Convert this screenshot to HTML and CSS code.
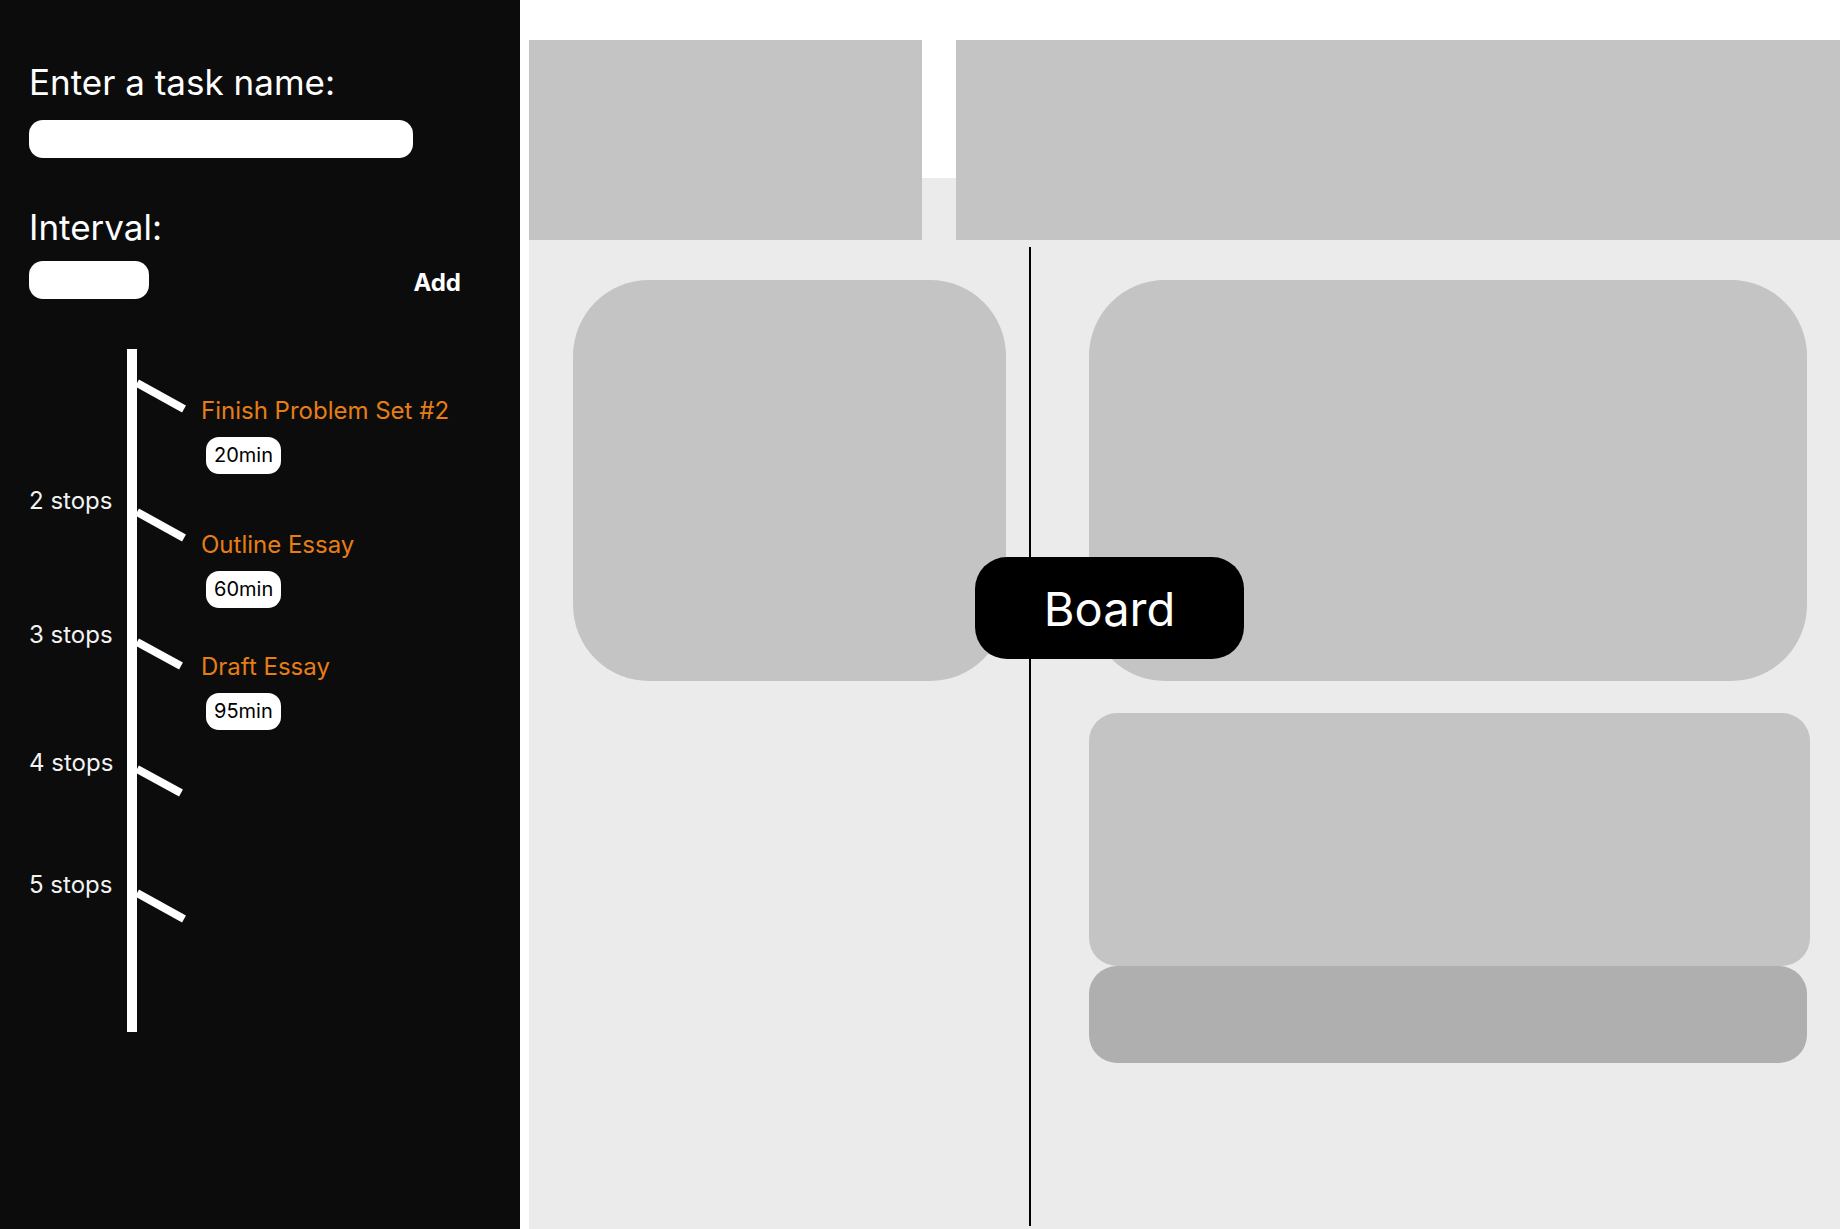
FILE: index.html
```html
<!DOCTYPE html>
<html lang="en">
<head>
<meta charset="UTF-8" />
<title>Task Board</title>
<link rel="stylesheet" href="styles.css">
</head>
<body>
  <aside class="sidebar">
    <h2 class="field-label">Enter a task name:</h2>
    <input class="field wide" type="text" />

    <h2 class="field-label interval">Interval:</h2>
    <div class="interval-row">
      <input class="field short" type="text" />
      <button class="add-btn">Add</button>
    </div>

    <div class="timeline">
      <div class="rail-cap"></div>

      <div class="stop">
        <span class="stop-label"></span>
        <i class="stop-rail"></i>
        <div class="stop-body">
          <svg class="tick" width="50" height="36" viewBox="0 0 50 36"><line x1="0" y1="5" x2="47" y2="31" /></svg>
          <div class="task">
            <p class="task-name">Finish Problem Set #2</p>
            <span class="task-time">20min</span>
          </div>
        </div>
      </div>

      <div class="stop">
        <span class="stop-label">2 stops</span>
        <i class="stop-rail"></i>
        <div class="stop-body">
          <svg class="tick" width="50" height="36" viewBox="0 0 50 36"><line x1="0" y1="5" x2="47" y2="31" /></svg>
          <div class="task">
            <p class="task-name">Outline Essay</p>
            <span class="task-time">60min</span>
          </div>
        </div>
      </div>

      <div class="stop">
        <span class="stop-label">3 stops</span>
        <i class="stop-rail"></i>
        <div class="stop-body">
          <svg class="tick" width="50" height="36" viewBox="0 0 50 36"><line x1="0" y1="5" x2="44" y2="29" /></svg>
          <div class="task">
            <p class="task-name">Draft Essay</p>
            <span class="task-time">95min</span>
          </div>
        </div>
      </div>

      <div class="stop">
        <span class="stop-label">4 stops</span>
        <i class="stop-rail"></i>
        <div class="stop-body">
          <svg class="tick" width="50" height="36" viewBox="0 0 50 36"><line x1="0" y1="5" x2="44" y2="29" /></svg>
        </div>
      </div>

      <div class="stop">
        <span class="stop-label">5 stops</span>
        <i class="stop-rail"></i>
        <div class="stop-body">
          <svg class="tick" width="50" height="36" viewBox="0 0 50 36"><line x1="0" y1="5" x2="47" y2="31" /></svg>
        </div>
      </div>
    </div>
  </aside>

  <main class="main">
    <header class="top">
      <div class="top-box small"></div>
      <div class="top-box large"></div>
    </header>

    <section class="board">
      <div class="col left">
        <div class="card tall narrow"></div>
      </div>
      <div class="divider"></div>
      <div class="col right">
        <div class="card tall"></div>
        <div class="card medium"></div>
        <div class="card footer"></div>
      </div>

      <button class="board-btn">Board</button>
    </section>
  </main>
</body>
</html>
```

FILE: styles.css
```css
* { box-sizing: border-box; }
html, body { margin: 0; height: 100%; }
body { display: flex; background: #fff; font-family: Inter, "Noto Sans", sans-serif; overflow: hidden; }

/* sidebar */
.sidebar { width: 520px; height: 1229px; flex-shrink: 0; background: #0c0c0c; color: #fff; padding: 61px 0 0 29px; }
.field-label { margin: 0; font-size: 35px; line-height: 42px; font-weight: 400; }
.field-label.interval { margin-top: 48px; }
.field { display: block; height: 38px; border: none; border-radius: 14px; background: #fff; padding: 0 12px; font: inherit; }
.field.wide { width: 384px; margin-top: 17px; }
.field.short { width: 120px; }
.interval-row { display: flex; align-items: center; justify-content: space-between; width: 432px; margin-top: 13px; }
.add-btn { background: none; border: none; padding: 0; margin-top: 4px; color: #fff; font: 700 24px/29px Inter, sans-serif; cursor: pointer; }

/* timeline */
.timeline { margin-top: 50px; }
.rail-cap { width: 10px; height: 29px; margin-left: 98px; background: #fff; }
.stop { display: grid; grid-template-columns: 98px 10px 1fr; height: 128px; }
.stop:nth-of-type(2) { height: 129px; }
.stop:nth-of-type(3) { height: 130px; }
.stop:nth-of-type(4) { height: 127px; }
.stop:nth-of-type(5) { height: 124px; }
.stop:last-child { height: 144px; }
.stop-label { margin-top: -19px; font-size: 24px; line-height: 29px; color: #f2f2f2; }
.stop:nth-of-type(3) .stop-label { margin-top: -21px; }
.stop:nth-of-type(4) .stop-label { margin-top: -17px; }
.stop:nth-of-type(5) .stop-label { margin-top: -16px; }
.stop:nth-of-type(6) .stop-label { margin-top: -18px; }
.stop-rail { background: #fff; }
.stop-body { display: flex; align-items: flex-start; }
.tick { display: block; flex-shrink: 0; }
.tick line { stroke: #fff; stroke-width: 8; }
.task { margin-left: 14px; padding-top: 18px; }
.stop:nth-of-type(3) .task { padding-top: 23px; }
.stop:nth-of-type(4) .task { padding-top: 15px; }
.task-name { margin: 0; font-size: 24px; line-height: 29px; color: #e67e16; }
.task-time { display: inline-block; margin: 12px 0 0 5px; padding: 6px 8px; background: #fff; color: #000; font-size: 20px; line-height: 25px; border-radius: 13px; }

/* main */
.main { flex: 1; margin-left: 9px; height: 1229px; padding-top: 40px; background: linear-gradient(#fff 178px, #ebebeb 178px); display: flex; flex-direction: column; }
.top { display: flex; gap: 34px; height: 200px; flex-shrink: 0; }
.top-box { background: #c4c4c4; }
.top-box.small { width: 393px; }
.top-box.large { flex: 1; }

.board { position: relative; flex: 1; display: grid; grid-template-columns: 500px 2px 1fr; margin-top: 7px; padding-bottom: 3px; }
.divider { background: #000; }
.col { padding-top: 33px; }
.col.left { padding-left: 44px; }
.col.right { padding-left: 58px; }
.card { background: #c4c4c4; }
.card.tall { width: 718px; height: 401px; border-radius: 76px; }
.card.tall.narrow { width: 433px; }
.card.medium { width: 721px; height: 253px; margin-top: 32px; border-radius: 28px; }
.card.footer { width: 718px; height: 97px; border-radius: 28px; background: #b0afb0; }

.board-btn { position: absolute; left: 446px; top: 310px; width: 269px; height: 102px; border: none; border-radius: 32px; background: #000; color: #fff; font: 400 47px Inter, sans-serif; cursor: pointer; }
```
